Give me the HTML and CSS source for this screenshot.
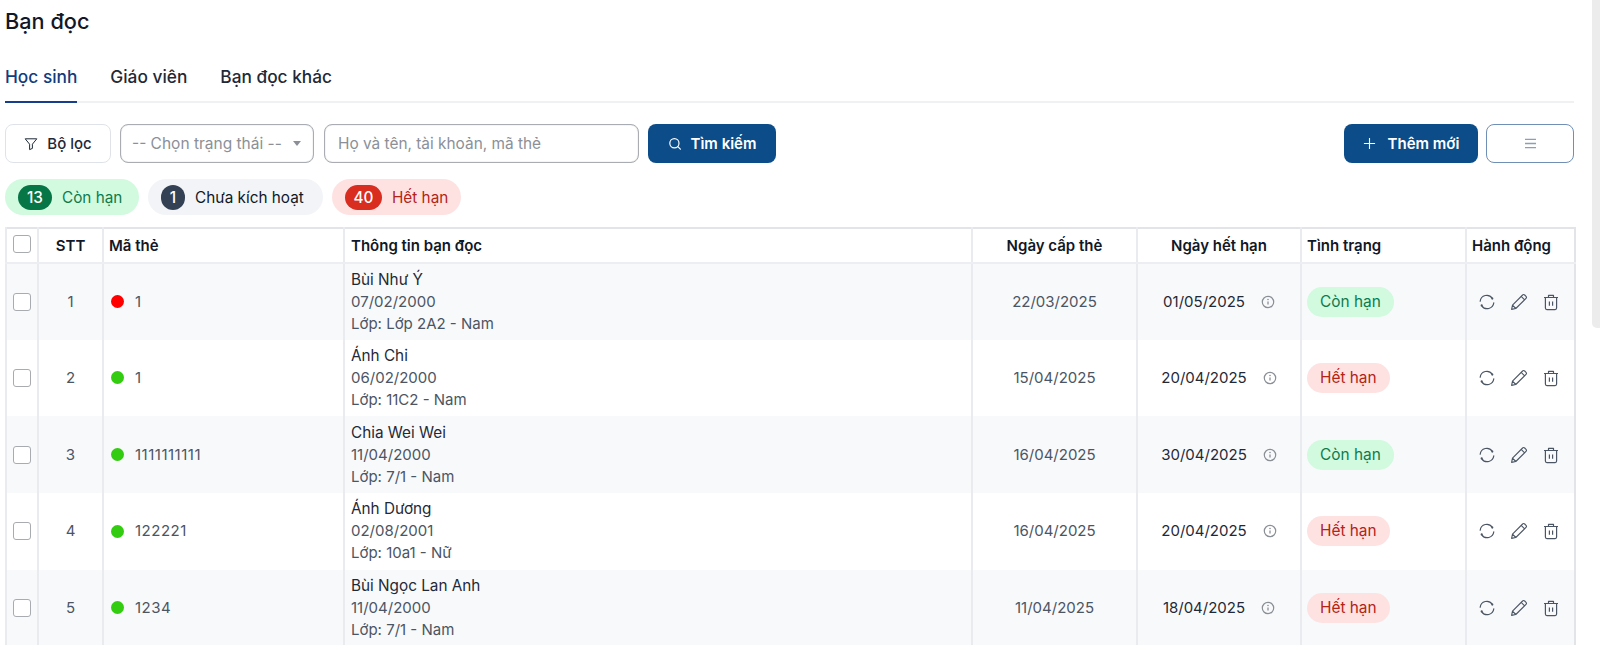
FILE: index.html
```html
<!DOCTYPE html>
<html lang="vi">
<head>
<meta charset="utf-8">
<title>Bạn đọc</title>
<link rel="stylesheet" href="styles.css">
</head>
<body>
<svg class="sprite" width="0" height="0" aria-hidden="true">
  <symbol id="i-refresh" viewBox="0 0 18 18"><path d="M2.2 8.2A6.6 6.6 0 0 1 14.2 5.2M15.8 9.8A6.6 6.6 0 0 1 3.8 12.8" fill="none" stroke="currentColor" stroke-width="1.2" stroke-linecap="round"/><circle cx="14.3" cy="5.6" r="1.1" fill="currentColor"/><circle cx="3.7" cy="12.4" r="1.1" fill="currentColor"/></symbol>
  <symbol id="i-pencil" viewBox="0 0 18 18"><path d="M1.6 16.4l.9-4.2L12.6 2a1.5 1.5 0 0 1 2.1 0l1.3 1.3a1.5 1.5 0 0 1 0 2.1L5.8 15.5zM2.5 12.2l3.3 3.3M11.2 3.4l3.4 3.4" fill="none" stroke="currentColor" stroke-width="1.1" stroke-linejoin="round"/></symbol>
  <symbol id="i-trash" viewBox="0 0 18 18"><path d="M2 4.5h14M6.5 4.5V2.4h5v2.1M3.4 4.5v10.6c0 .9.6 1.5 1.5 1.5h8.2c.9 0 1.5-.6 1.5-1.5V4.5M7.4 8.4v4.4M10.6 8.4v4.4" fill="none" stroke="currentColor" stroke-width="1.2" stroke-linejoin="round"/></symbol>
  <symbol id="i-info" viewBox="0 0 14 14"><circle cx="7" cy="7" r="5.7" fill="none" stroke="currentColor" stroke-width="1.2"/><path d="M7 6.4v3.2" stroke="currentColor" stroke-width="1.3"/><circle cx="7" cy="4.5" r=".8" fill="currentColor"/></symbol>
</svg>

<div class="page">
  <main class="content">
    <h1 class="title">Bạn đọc</h1>

    <nav class="tabs">
      <a class="tab tab-active">Học sinh</a>
      <a class="tab">Giáo viên</a>
      <a class="tab">Bạn đọc khác</a>
    </nav>

    <div class="toolbar">
      <button class="btn btn-filter">
        <svg class="btn-icon" viewBox="0 0 14 14"><path d="M1.2 1.8h11.6L8.4 7.2v4.2L5.6 12.6V7.2z" fill="none" stroke="currentColor" stroke-width="1" stroke-linejoin="round"/></svg>
        Bộ lọc
      </button>
      <div class="select">
        <span>-- Chọn trạng thái --</span>
        <span class="caret"></span>
      </div>
      <div class="search-input">Họ và tên, tài khoản, mã thẻ</div>
      <button class="btn btn-primary btn-search">
        <svg class="btn-icon" viewBox="0 0 14 14"><circle cx="6.4" cy="6.2" r="4.6" fill="none" stroke="currentColor" stroke-width="1.2"/><path d="M9.8 9.6l2.6 2.6" stroke="currentColor" stroke-width="1.2" stroke-linecap="round"/></svg>
        Tìm kiếm
      </button>
      <div class="toolbar-right">
        <button class="btn btn-primary btn-add">
          <svg class="plus-icon" viewBox="0 0 14 14"><path d="M7 1v12M1 7h12" stroke="currentColor" stroke-width="1.2"/></svg>
          Thêm mới
        </button>
        <button class="btn btn-menu" aria-label="Menu">
          <svg class="menu-icon" viewBox="0 0 14 12"><path d="M1 1.5h12M1 6h12M1 10.5h12" stroke="currentColor" stroke-width="1.4"/></svg>
        </button>
      </div>
    </div>

    <div class="chips">
      <div class="chip chip-green"><span class="count count-green">13</span>Còn hạn</div>
      <div class="chip chip-gray"><span class="count count-gray">1</span>Chưa kích hoạt</div>
      <div class="chip chip-red"><span class="count count-red">40</span>Hết hạn</div>
    </div>

    <table class="grid">
      <colgroup>
        <col class="c-check"><col class="c-stt"><col class="c-code"><col class="c-info"><col class="c-issued"><col class="c-expire"><col class="c-status"><col class="c-action">
      </colgroup>
      <thead>
        <tr>
          <th class="center"><span class="check check-head"></span></th>
          <th class="center">STT</th>
          <th>Mã thẻ</th>
          <th class="info-col">Thông tin bạn đọc</th>
          <th class="center">Ngày cấp thẻ</th>
          <th class="center">Ngày hết hạn</th>
          <th>Tình trạng</th>
          <th>Hành động</th>
        </tr>
      </thead>
      <tbody>
        <tr>
          <td class="center"><span class="check"></span></td>
          <td class="center">1</td>
          <td><div class="code"><span class="dot dot-red"></span>1</div></td>
          <td class="info-col"><div class="name">Bùi Như Ý</div><div>07/02/2000</div><div>Lớp: Lớp 2A2 - Nam</div></td>
          <td class="center">22/03/2025</td>
          <td><div class="expire">01/05/2025<svg class="info"><use href="#i-info"/></svg></div></td>
          <td><span class="status status-ok">Còn hạn</span></td>
          <td><div class="actions"><svg class="act"><use href="#i-refresh"/></svg><svg class="act"><use href="#i-pencil"/></svg><svg class="act"><use href="#i-trash"/></svg></div></td>
        </tr>
        <tr>
          <td class="center"><span class="check"></span></td>
          <td class="center">2</td>
          <td><div class="code"><span class="dot dot-green"></span>1</div></td>
          <td class="info-col"><div class="name">Ánh Chi</div><div>06/02/2000</div><div>Lớp: 11C2 - Nam</div></td>
          <td class="center">15/04/2025</td>
          <td><div class="expire">20/04/2025<svg class="info"><use href="#i-info"/></svg></div></td>
          <td><span class="status status-bad">Hết hạn</span></td>
          <td><div class="actions"><svg class="act"><use href="#i-refresh"/></svg><svg class="act"><use href="#i-pencil"/></svg><svg class="act"><use href="#i-trash"/></svg></div></td>
        </tr>
        <tr>
          <td class="center"><span class="check"></span></td>
          <td class="center">3</td>
          <td><div class="code"><span class="dot dot-green"></span>1111111111</div></td>
          <td class="info-col"><div class="name">Chia Wei Wei</div><div>11/04/2000</div><div>Lớp: 7/1 - Nam</div></td>
          <td class="center">16/04/2025</td>
          <td><div class="expire">30/04/2025<svg class="info"><use href="#i-info"/></svg></div></td>
          <td><span class="status status-ok">Còn hạn</span></td>
          <td><div class="actions"><svg class="act"><use href="#i-refresh"/></svg><svg class="act"><use href="#i-pencil"/></svg><svg class="act"><use href="#i-trash"/></svg></div></td>
        </tr>
        <tr>
          <td class="center"><span class="check"></span></td>
          <td class="center">4</td>
          <td><div class="code"><span class="dot dot-green"></span>122221</div></td>
          <td class="info-col"><div class="name">Ánh Dương</div><div>02/08/2001</div><div>Lớp: 10a1 - Nữ</div></td>
          <td class="center">16/04/2025</td>
          <td><div class="expire">20/04/2025<svg class="info"><use href="#i-info"/></svg></div></td>
          <td><span class="status status-bad">Hết hạn</span></td>
          <td><div class="actions"><svg class="act"><use href="#i-refresh"/></svg><svg class="act"><use href="#i-pencil"/></svg><svg class="act"><use href="#i-trash"/></svg></div></td>
        </tr>
        <tr>
          <td class="center"><span class="check"></span></td>
          <td class="center">5</td>
          <td><div class="code"><span class="dot dot-green"></span>1234</div></td>
          <td class="info-col"><div class="name">Bùi Ngọc Lan Anh</div><div>11/04/2000</div><div>Lớp: 7/1 - Nam</div></td>
          <td class="center">11/04/2025</td>
          <td><div class="expire">18/04/2025<svg class="info"><use href="#i-info"/></svg></div></td>
          <td><span class="status status-bad">Hết hạn</span></td>
          <td><div class="actions"><svg class="act"><use href="#i-refresh"/></svg><svg class="act"><use href="#i-pencil"/></svg><svg class="act"><use href="#i-trash"/></svg></div></td>
        </tr>
      </tbody>
    </table>
  </main>
  <div class="scroll-track"><div class="scroll-thumb"></div></div>
</div>
</body>
</html>
```

FILE: styles.css
```css
* { box-sizing: border-box; }
html, body { margin: 0; height: 645px; overflow: hidden; background: #fff; }
body { font-family: Inter, "Liberation Sans", sans-serif; font-size: 15px; color: #374151; }
.sprite { position: absolute; }

.page { display: flex; justify-content: space-between; height: 645px; }
.content { width: 1574px; padding-left: 5px; flex: none; }
.scroll-track { width: 8px; flex: none; }
.scroll-thumb { height: 328px; background: #ececec; border-radius: 0 0 0 5px; }

.title { margin: 0; padding-top: 7px; height: 44px; font-size: 21.7px; line-height: 28px; font-weight: 500; color: #111827; }

.tabs { display: flex; gap: 33px; height: 59px; padding-top: 22px; border-bottom: 2px solid #f0f1f3; }
.tab { height: 37px; font-size: 17.3px; line-height: 22px; font-weight: 500; color: #1f2937; }
.tab-active { color: #113c7e; border-bottom: 2px solid #173d8f; }

.toolbar { display: flex; align-items: stretch; height: 39px; margin-top: 21px; }
.btn { display: flex; align-items: center; justify-content: center; font-family: inherit; font-size: 15px; font-weight: 500; border-radius: 8px; padding: 0; cursor: pointer; }
.btn-icon { width: 14px; height: 14px; flex: none; }
.btn-filter { width: 106px; gap: 9px; background: #fff; color: #1f2937; border: 1px solid #dfe3e9; }
.btn-primary { background: #0b4c89; color: #fff; border: 0; font-weight: 600; }
.btn-search { width: 128px; gap: 9px; margin-left: 9px; }
.select { display: flex; align-items: center; justify-content: space-between; width: 194px; margin-left: 9px; padding: 0 12px 0 11px; border: 1px solid #a9adb3; border-radius: 8px; color: #8b9098; font-size: 15.5px; box-shadow: inset 0 0 1px #999; }
.caret { width: 0; height: 0; border-left: 4px solid transparent; border-right: 4px solid transparent; border-top: 5px solid #8b9098; }
.search-input { display: flex; align-items: center; width: 315px; margin-left: 10px; padding: 0 13px; border: 1px solid #a9adb3; border-radius: 8px; color: #8b9098; font-size: 15.4px; box-shadow: inset 0 0 1px #999; }
.toolbar-right { display: flex; gap: 8px; margin-left: auto; }
.btn-add { width: 134px; gap: 12px; }
.plus-icon { width: 13px; height: 13px; }
.btn-menu { width: 88px; background: #fff; color: #8ba0b8; border: 1px solid #6f8fb5; }
.menu-icon { width: 13px; height: 11px; }

.chips { display: flex; gap: 9px; height: 36px; margin-top: 16px; }
.chip { display: flex; align-items: center; height: 36px; padding: 0 13px; border-radius: 18px; font-size: 15.3px; white-space: nowrap; }
.chip-green { width: 134px; background: #d1fadf; color: #0f7a4d; }
.chip-gray { width: 175px; background: #f2f4f7; color: #111827; }
.chip-red { width: 129px; background: #fee2e2; color: #b42318; }
.count { display: flex; align-items: center; justify-content: center; height: 25px; border-radius: 13px; color: #fff; font-weight: 500; margin-right: 10px; flex: none; }
.count-green { width: 34px; background: #067647; }
.count-gray { width: 24px; background: #344054; }
.count-red { width: 37px; background: #d92d20; }

.grid { table-layout: fixed; width: 1569px; margin-top: 12px; border-collapse: collapse; border-top: 2px solid #e3e4e7; border-left: 2px solid #e3e4e7; border-right: 2px solid #e3e4e7; }
.c-check { width: 32px; }
.c-stt { width: 65px; }
.c-code { width: 241px; }
.c-info { width: 628px; }
.c-issued { width: 165px; }
.c-expire { width: 164px; }
.c-status { width: 165px; }
.c-action { width: 109px; }

.grid th, .grid td { padding: 0 5px; text-align: left; vertical-align: middle; border-left: 2px solid #eaebef; }
.grid th { height: 35px; font-size: 15px; font-weight: 600; color: #111827; border-bottom: 2px solid #eceef1; }
.grid td { height: 76.67px; line-height: 22px; color: #4b5563; }
.grid .center { text-align: center; }
.grid .info-col { padding-left: 6px; }
.grid tbody tr:nth-child(odd) { background: #f8f9fb; }

.check { display: block; width: 18px; height: 18px; margin: 0 auto; background: #fff; border: 1px solid #a8abb0; border-radius: 3px; }
.check-head { margin-top: -3px; }
.name { color: #1f2937; font-weight: 400; font-size: 15.3px; }
.code { display: flex; align-items: center; letter-spacing: .5px; }
.dot { width: 13px; height: 13px; margin: 0 11px 0 2px; border-radius: 50%; }
.dot-red { background: #ff0000; }
.dot-green { background: #33cc11; }
.expire { display: flex; align-items: center; justify-content: center; gap: 16px; color: #1f2937; }
.info { width: 14px; height: 14px; color: #8a8f96; }
.status { display: inline-block; height: 30px; line-height: 30px; padding: 0 13px; border-radius: 15px; font-size: 15.4px; white-space: nowrap; }
.status-ok { background: #d1fadf; color: #0f7a4d; }
.status-bad { background: #fee2e2; color: #b42318; }
.actions { display: flex; justify-content: center; gap: 14px; padding-right: 4px; color: #4b5563; }
.act { width: 18px; height: 18px; }
```
